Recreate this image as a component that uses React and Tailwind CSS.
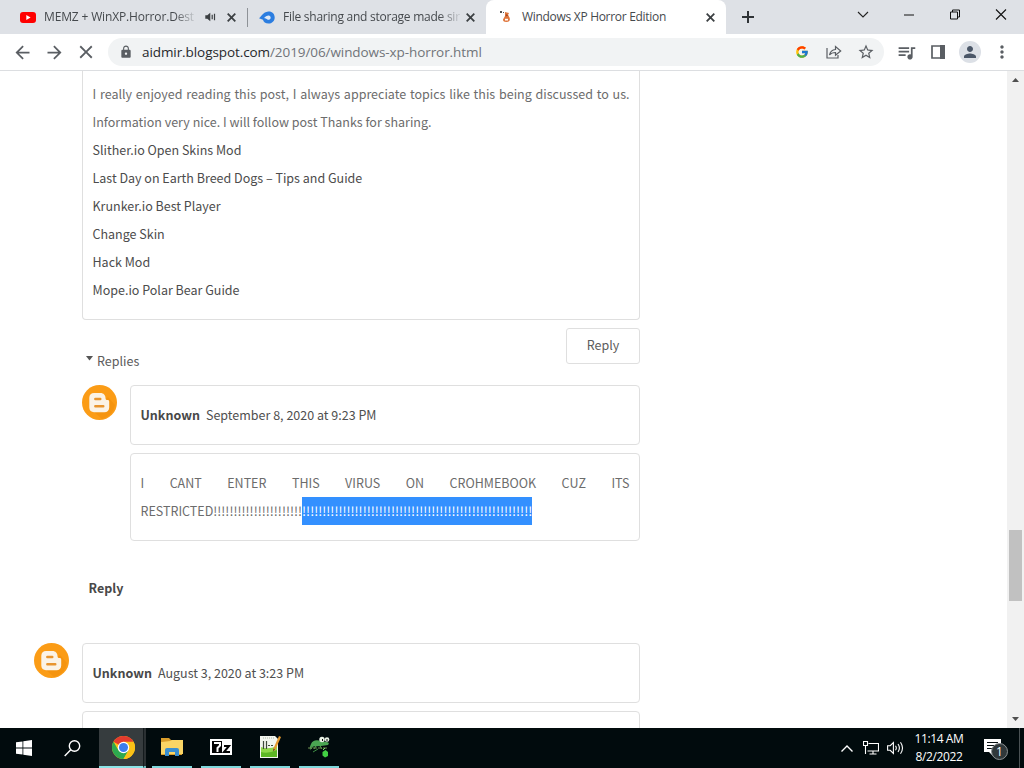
import React from 'react';
import clsx from 'clsx';
import {
  MdArrowBack,
  MdArrowForward,
  MdClose,
  MdLock,
  MdStarBorder,
  MdQueueMusic,
  MdPerson,
  MdMoreVert,
} from 'react-icons/md';
import { FcGoogle } from 'react-icons/fc';

const links = [
  'Slither.io Open Skins Mod',
  'Last Day on Earth Breed Dogs – Tips and Guide',
  'Krunker.io Best Player',
  'Change Skin',
  'Hack Mod',
  'Mope.io Polar Bear Guide',
];

const TabClose = ({ className }) => (
  <svg className={clsx('w-[9px] h-[9px] shrink-0', className)} viewBox="0 0 9 9" stroke="#3c4043" strokeWidth="1.8">
    <path d="M.7.7l7.6 7.6M8.3.7L.7 8.3" />
  </svg>
);

const TabStrip = () => (
  <div className="flex h-[34px] bg-[#dee1e6] text-[12px] tracking-[-0.3px] text-[#45494d] font-['Open_Sans','Noto_Sans',sans-serif]">
    <div className="flex items-center w-[247px] pl-5 shrink-0">
      <svg className="w-4 h-[11px] shrink-0" viewBox="0 0 16 11">
        <rect width="16" height="11" rx="3" fill="#f00" />
        <path d="M6.3 3l4.3 2.5L6.3 8z" fill="#fff" />
      </svg>
      <span className="ml-2 w-[151px] whitespace-nowrap tracking-[-0.15px] [mask-image:linear-gradient(to_right,black_130px,transparent_154px)]">
        MEMZ + WinXP.Horror.Destr
      </span>
      <svg className="ml-[10px] w-[11px] h-[10px] shrink-0" viewBox="0 0 11 10" fill="none" stroke="#3c4043">
        <path d="M.3 3.2h2L5.3.7v8.6L2.3 6.8h-2z" fill="#3c4043" stroke="none" />
        <path d="M7.2 2.8v4.4M9.5 1.8v6.4" strokeWidth="1.2" />
      </svg>
      <TabClose className="ml-[11px]" />
    </div>
    <div className="flex items-center w-[239px] shrink-0">
      <div className="w-px h-[19px] bg-[#8e9297]" />
      <svg className="ml-[11px] w-4 h-[13px] shrink-0" viewBox="0 0 16 13">
        <path d="M0 7.2C2.5 5.3 3.8 1.2 9.3.5c4-.2 6.4 2.5 6.4 6s-2.7 6.1-6.2 6.1C6.500 12.600 4.400 10.800 4 8.800z" fill="#2b7de0" />
        <path d="M5 7Q7 4.200 9.600 4.400a2.200 2.200 0 1 1-1.500 3.900Q7 7.200 5 7z" fill="#dee9f7" />
      </svg>
      <span className="ml-2 w-[178px] whitespace-nowrap tracking-[-0.25px] [mask-image:linear-gradient(to_right,black_156px,transparent_180px)]">
        File sharing and storage made sir
      </span>
      <TabClose className="ml-[5px]" />
    </div>
    <div className="flex items-center w-[240px] pl-[14px] rounded-t-lg bg-white shrink-0">
      <svg className="w-3 h-[14px] shrink-0" viewBox="0 0 12 14">
        <path d="M0 1h2v2H0zM3 2h1v1H3z" fill="#555" />
        <path d="M5 2l4 1-1 2 1.500 2.500c1 2.500 0 4.500-3 4.500S3 11 3 9.500L5 6z" fill="#e0763c" />
        <path d="M5 8.800h3v1.700H5z" fill="#fff" />
        <path d="M6 4l2.500 1.500-3 1z" fill="#a34a25" />
      </svg>
      <span className="ml-[10px] w-[184px] whitespace-nowrap">Windows XP Horror Edition</span>
      <TabClose />
    </div>
    <svg className="ml-4 mt-[11px] w-3 h-3 shrink-0" viewBox="0 0 12 12" stroke="#2f3336" strokeWidth="2">
      <path d="M6 0v12M0 6h12" />
    </svg>
    <div className="flex ml-auto h-[29px] items-center">
      <svg className="w-[46px] h-3" viewBox="0 0 46 12" fill="none" stroke="#222" strokeWidth="1.1">
        <path d="M18 3l5 5 5-5" />
      </svg>
      <svg className="w-[46px] h-3" viewBox="0 0 46 12" stroke="#111">
        <path d="M18 6h10" />
      </svg>
      <svg className="w-[46px] h-3" viewBox="0 0 46 12" fill="none" stroke="#111">
        <path d="M18.500 3h7v7h-7zM20.500 3V1h7v7h-2" />
      </svg>
      <svg className="w-[46px] h-3" viewBox="0 0 46 12" fill="none" stroke="#111" strokeWidth="1.1">
        <path d="M18 .5l10 10M28 .5l-10 10" />
      </svg>
    </div>
  </div>
);

const Cell = ({ children }) => (
  <div className="flex w-8 shrink-0 items-center justify-center">{children}</div>
);

const Toolbar = () => (
  <div className="flex h-[37px] items-center border-b border-[#dcdee1] bg-white pl-[6px] pr-[6px] text-[#5a5e63]">
    <Cell><MdArrowBack size={21} /></Cell>
    <Cell><MdArrowForward size={21} /></Cell>
    <Cell><MdClose size={22} /></Cell>
    <div className="flex ml-[6px] mr-[6px] flex-1 h-7 items-center rounded-full bg-[#f1f3f4] pl-[11px] pr-[2px]">
      <MdLock size={14} />
      <span className="ml-[9px] flex-1 whitespace-nowrap text-[13.5px] tracking-[-0.08px] text-[#707479] font-['Open_Sans','Noto_Sans',sans-serif]">
        <span className="text-[#26282b]">aidmir.blogspot.com</span>/2019/06/windows-xp-horror.html
      </span>
      <Cell><FcGoogle size={14} /></Cell>
      <Cell>
        <svg width="16" height="14" viewBox="0 0 16 14" fill="none" stroke="currentColor" strokeWidth="1.2">
          <path d="M1 3v10h11v-3" />
          <path d="M3.500 10Q4.500 4.800 9.500 4.500V1.500L14.700 6 9.500 10.300V7.500Q5.500 7.500 3.500 10z" />
        </svg>
      </Cell>
      <Cell><MdStarBorder size={18} /></Cell>
    </div>
    <Cell><MdQueueMusic size={21} /></Cell>
    <Cell>
      <svg width="14" height="14" viewBox="0 0 14 14">
        <path d="M1 1h12v12H1z" fill="none" stroke="currentColor" strokeWidth="1.700" />
        <path d="M9 0h5v14H9z" fill="currentColor" />
      </svg>
    </Cell>
    <Cell>
      <div className="flex size-[22px] items-center justify-center rounded-full bg-[#dce0e6] text-[#4b5768]">
        <MdPerson size={18} />
      </div>
    </Cell>
    <Cell><MdMoreVert size={20} /></Cell>
  </div>
);

const BloggerAvatar = () => (
  <svg className="size-[35px] shrink-0" viewBox="0 0 35 35">
    <circle cx="17.500" cy="17.500" r="17.500" fill="#fb9c16" />
    <path d="M26 12l7 8a17 17 0 0 1-13 14l-9-8z" fill="#f5940f" />
    <path d="M12 8h6.500c3 0 5 2.300 5 5 0 1.500.6 2 2 2 1.200 0 1.700.6 1.700 1.700v5.800c0 3-2 4.800-4.700 4.800H12c-2.700 0-4.700-1.900-4.700-4.700V12.700C7.300 9.900 9.300 8 12 8z" fill="#fbf3e6" />
    <path d="M13.300 14h5M13.300 21.300h8" stroke="#e8952f" strokeWidth="2.400" strokeLinecap="round" />
  </svg>
);

const CommentHeader = ({ date }) => (
  <div className="flex h-[60px] items-center rounded border border-[#dfdfdf] px-[9.5px] text-[#505050]">
    <b className="mr-[6px] text-[#484848]">Unknown</b>
    <span>{date}</span>
  </div>
);

const Comments = () => (
  <div className="flex-1 overflow-hidden pl-[34px] text-[12.5px] leading-[28px] text-[#6c6c6c] font-['Noto_Sans_CJK_SC',sans-serif]">
    <div className="w-[606px] pl-12">
      <div className="rounded-b border border-t-0 border-[#dfdfdf] px-[9.5px] pt-[9px] pb-[15px]">
        <p className="whitespace-nowrap [text-align-last:justify]">
          I really enjoyed reading this post, I always appreciate topics like this being discussed to us.
        </p>
        <p>Information very nice. I will follow post Thanks for sharing.</p>
        {links.map((link) => (
          <a key={link} className="block text-[#4c4c4c]">{link}</a>
        ))}
      </div>
      <div className="flex h-[65px] pt-2">
        <div className="flex items-center pl-1 pt-[21px] h-[45px]">
          <svg className="w-[7px] h-[5px] mb-[5px]" viewBox="0 0 7 5" fill="#555">
            <path d="M0 0h7L3.500 4.500z" />
          </svg>
          <span className="ml-1 text-[#5c5c5c]">Replies</span>
        </div>
        <button className="ml-auto h-9 w-[74px] rounded-[3px] border border-[#dfdfdf] pb-[2px] leading-[26px] text-[#5c5c5c]">Reply</button>
      </div>
      <div className="flex gap-[13px]">
        <BloggerAvatar />
        <div className="flex-1">
          <CommentHeader date="September 8, 2020 at 9:23 PM" />
          <div className="mt-2 h-[88px] rounded border border-[#dfdfdf] px-[9.5px] pt-[15px]">
            <p className="[text-align-last:justify]">I CANT ENTER THIS VIRUS ON CROHMEBOOK CUZ ITS</p>
            <p className="flex whitespace-nowrap">
              <span>RESTRICTED{'!'.repeat(22)}</span>
              <span className="bg-[#3390ff] text-white">{'!'.repeat(57)}</span>
            </p>
          </div>
        </div>
      </div>
      <b className="block mt-[33px] pl-[6.5px] text-[#484848]">Reply</b>
    </div>
    <div className="mt-[41px] flex w-[606px] gap-[13px]">
      <BloggerAvatar />
      <div className="flex-1">
        <CommentHeader date="August 3, 2020 at 3:23 PM" />
        <div className="mt-2 h-[60px] rounded border border-[#dfdfdf]" />
      </div>
    </div>
  </div>
);

const Scrollbar = () => (
  <div className="flex w-[17px] flex-col items-center bg-[#f1f1f1]">
    <svg className="mt-[7px] w-[7px] h-1" viewBox="0 0 7 4" fill="#505050"><path d="M0 4h7L3.500 0z" /></svg>
    <div className="mt-[448px] h-[71px] w-[13px] bg-[#c1c1c1]" />
    <svg className="mt-auto mb-[7px] w-[7px] h-1" viewBox="0 0 7 4" fill="#505050"><path d="M0 0h7L3.500 4z" /></svg>
  </div>
);

const ChromeIcon = () => (
  <svg className="size-[23px]" viewBox="0 0 24 24">
    <circle cx="12" cy="12" r="12" fill="#fbc116" />
    <path d="M12 12L1.600 6A12 12 0 0 1 22.400 6z" fill="#e33b2e" />
    <path d="M1.600 6A12 12 0 0 0 12 24l5.200-9L12 12 6.800 15z" fill="#2da94f" />
    <path d="M12 6h10.400A12 12 0 0 1 12 24l5.200-9z" fill="#fbc116" />
    <circle cx="12" cy="12" r="6" fill="#fff" />
    <circle cx="12" cy="12" r="4.700" fill="#3b7ded" />
  </svg>
);

const FolderIcon = () => (
  <svg className="w-[22px] h-5" viewBox="0 0 22 20">
    <path d="M0 1h8l2 2h11v15H0z" fill="#d99e2b" />
    <path d="M1 5l8-1 2-1h11v14H0V5z" fill="#fad565" />
    <path d="M4 19v-6q0-2 2-2h10q2 0 2 2v6h-4v-4H8v4z" fill="#3a8fd0" />
  </svg>
);

const SevenZipIcon = () => (
  <svg className="w-[22px] h-4" viewBox="0 0 22 16">
    <path d="M0 0h22v16H0z" fill="#fff" />
    <path d="M2 2h10v12H2z" fill="#050505" />
    <path d="M4 4h6v2.500L7.500 9v4" fill="none" stroke="#fff" strokeWidth="2" />
    <path d="M14 7h5l-5 6h6" fill="none" stroke="#050505" strokeWidth="2" />
  </svg>
);

const NotepadIcon = () => (
  <svg className="w-[22px] h-6" viewBox="0 0 22 24">
    <path d="M1 1h15l3 3v19H1z" fill="#f2f6ee" />
    <path d="M2 12Q9 15 18 11v11H2z" fill="#8fd84a" />
    <path d="M2 17Q9 19 18 15v7H2z" fill="#5cb724" />
    <path d="M4.500 6v8M7.500 6v8M9 10.500h2M12 10.500h2" stroke="#3f4a3b" strokeWidth="1.200" />
    <path d="M4 3h11" stroke="#a9b3a4" strokeDasharray="1 1" />
    <path d="M21 1.500L15 15" stroke="#e69a2c" strokeWidth="2.200" />
    <path d="M14.500 13.500l-.5 3 2-2z" fill="#664421" />
  </svg>
);

const ChameleonIcon = () => (
  <svg className="w-[22px] h-[22px]" viewBox="0 0 22 22">
    <path d="M3 8Q5 3.500 11 4.500l3 1 5 .5q3 1 1 3L13 10l-9 .5q-2 2-1 4-2-2-1-4z" fill="#4aa552" />
    <path d="M5 10l-2 3M8 10l-2 3M12 10l2 3" stroke="#4fae4f" strokeWidth="1" fill="none" />
    <circle cx="14" cy="3.500" r="2.700" fill="#e9f2e6" />
    <circle cx="19" cy="3.500" r="2.300" fill="#e9f2e6" />
    <path d="M14 3h1v2h-1zM18.500 3h1v2h-1z" fill="#111" />
    <path d="M0 12h20" stroke="#6f8c50" strokeDasharray="4 1" />
    <path d="M5 16l5-3" stroke="#3e8c43" />
    <path d="M14.500 16l3-2 2.500 2v4l-3 1.500-2.500-2z" fill="#42d143" />
    <path d="M15 14l2-2" stroke="#7ee86d" />
  </svg>
);

const TaskButton = ({ children }) => (
  <div className="mr-[9px] flex h-10 w-10 items-center justify-center border-b-2 border-[#7fd8dc]">{children}</div>
);

const Taskbar = () => (
  <div className="flex h-10 bg-[#010b0d] text-white">
    <div className="flex w-12 items-center justify-center">
      <svg className="size-4" viewBox="0 0 16 16" fill="#fff">
        <path d="M0 2.300L6.500 1.400v6.200H0zM7.300 1.300L16 0v7.600H7.300zM0 8.400h6.500v6.200L0 13.700zM7.300 8.400H16V16l-8.700-1.300z" />
      </svg>
    </div>
    <div className="flex w-[51px] items-center justify-center pr-[6px]">
      <svg className="ml-1 size-[17px]" viewBox="0 0 17 17" fill="none" stroke="#fff" strokeWidth="1.400">
        <circle cx="10.500" cy="6" r="5.200" />
        <path d="M6.800 9.700L.7 16" />
      </svg>
    </div>
    <div className="flex w-[44px] items-center justify-center border-b-2 border-[#8be4e6] bg-[#363c3e] pl-1">
      <ChromeIcon />
    </div>
    <div className="mr-[6px] w-[3px] border-b-2 border-[#6db9bb] border-l border-l-[#141b1d] bg-[#2a3032]" />
    <TaskButton><FolderIcon /></TaskButton>
    <TaskButton><SevenZipIcon /></TaskButton>
    <TaskButton><NotepadIcon /></TaskButton>
    <TaskButton><ChameleonIcon /></TaskButton>
    <div className="ml-auto flex items-center">
      <svg className="w-3 h-[7px]" viewBox="0 0 12 7" fill="none" stroke="#fff" strokeWidth="1.400"><path d="M.5 6.500L6 1l5.500 5.500" /></svg>
      <svg className="ml-[10px] w-4 h-[14px]" viewBox="0 0 16 14" fill="none" stroke="#fff" strokeWidth="1.100">
        <path d="M5.500 2.500h10v7.500H4.500M10 10v3M6.500 13h7M.5.500h4v4h-4zM2.500 4.500V13" />
      </svg>
      <svg className="ml-2 w-[17px] h-[14px]" viewBox="0 0 17 14" fill="none" stroke="#fff" strokeWidth="1.100">
        <path d="M.6 4.700h2.600L6.400 1.500v11L3.200 9.300H.6zM8.500 4.800q1.600 2.200 0 4.400M11 3q2.800 4 0 8M13.500 1.200q4 5.800 0 11.600" />
      </svg>
      <div className="ml-[6px] w-[58px] text-center text-[12px] leading-[18px] tracking-[-0.4px] whitespace-nowrap font-['Open_Sans','Noto_Sans',sans-serif]">
        <div>11:14 AM</div>
        <div>8/2/2022</div>
      </div>
      <div className="relative ml-4 mr-[11px] w-6 h-6">
        <svg className="mt-[3px] w-[17px] h-[17px]" viewBox="0 0 17 17">
          <path d="M0 0h17v13H9v4l-4-4H0z" fill="#fff" />
          <path d="M3 3.500h11M3 6.500h11M3 9.500h8" stroke="#071012" />
        </svg>
        <span className="absolute left-[7px] top-[7px] flex size-[17px] items-center justify-center rounded-full border border-[#8b9193] bg-[#30383a] text-[12px] leading-none font-['Open_Sans',sans-serif]">
          1
        </span>
      </div>
      <div className="h-10 w-[5px] border-l border-[#4a5254]" />
    </div>
  </div>
);

const App = () => (
  <div className="flex h-[768px] w-[1024px] flex-col overflow-hidden bg-white">
    <TabStrip />
    <Toolbar />
    <div className="flex min-h-0 flex-1">
      <Comments />
      <Scrollbar />
    </div>
    <Taskbar />
  </div>
);

export default App;
